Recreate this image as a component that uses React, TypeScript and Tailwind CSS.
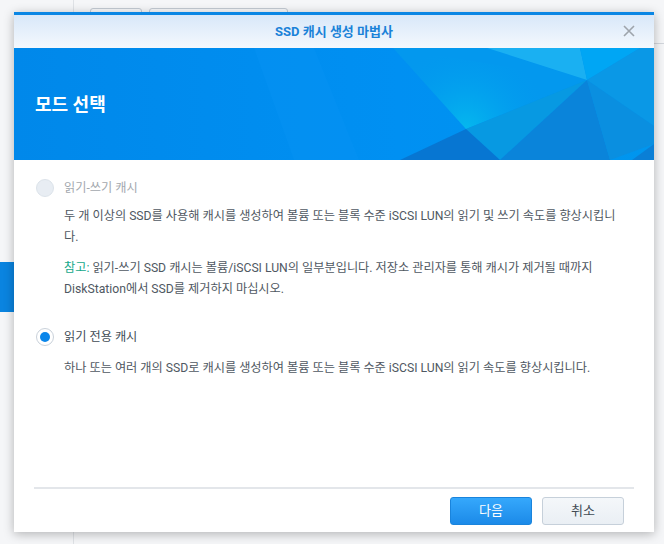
import React from 'react';

const font = { fontFamily: 'Roboto, "Noto Sans CJK KR", "Noto Sans", sans-serif' };

const Banner: React.FC = () => (
  <svg className="absolute inset-0" width="640" height="112" viewBox="0 0 640 112" preserveAspectRatio="none">
    <defs>
      <linearGradient id="bg" x1="0" y1="0" x2="1" y2="0">
        <stop offset="0" stopColor="#0088ea" />
        <stop offset="0.6" stopColor="#0090f2" />
        <stop offset="1" stopColor="#0096ee" />
      </linearGradient>
      <radialGradient id="glow" cx="452" cy="81" r="90" gradientUnits="userSpaceOnUse">
        <stop offset="0" stopColor="#05b8ee" />
        <stop offset="1" stopColor="#0096ee" stopOpacity="0" />
      </radialGradient>
    </defs>
    <rect width="640" height="112" fill="url(#bg)" />
    <polygon points="240,0 300,0 345,112 280,112" fill="#0a95f4" opacity="0.3" />
    <polygon points="379,0 473,0 573,32 452,81" fill="#0398ee" />
    <polygon points="379,0 573,32 452,81" fill="url(#glow)" />
    <polygon points="473,0 566,0 573,32" fill="#1ab0f2" />
    <polygon points="566,0 626,0 573,32" fill="#00a6f4" />
    <polygon points="626,0 640,0 640,78 573,32" fill="#0a98e6" />
    <polygon points="452,81 573,32 486,112" fill="#0799e2" />
    <polygon points="452,81 486,112 386,112" fill="#0776d2" />
    <polygon points="573,32 486,112 596,112" fill="#0a84da" />
    <polygon points="573,32 640,78 640,96 596,112" fill="#0a8fe0" />
    <polygon points="640,96 640,112 618,112" fill="#0a7fd6" />
  </svg>
);

const App: React.FC = () => {
  return (
    <div className="relative w-[664px] h-[544px] bg-[#f5f6f8] overflow-hidden" style={font}>
      {/* desktop behind the dialog */}
      <div className="absolute left-[73px] top-0 w-px h-full bg-[#dfe2e6]" />
      <div className="absolute left-[90px] top-[8px] w-[52px] h-[20px] rounded-[3px] border border-[#c3cad3] bg-[#f7f8fa]" />
      <div className="absolute left-[149px] top-[8px] w-[139px] h-[20px] rounded-[3px] border border-[#c3cad3] bg-[#f7f8fa]" />
      <div className="absolute left-0 top-[262px] w-[14px] h-[50px] bg-[#0a84e0]" />
      <div className="absolute left-[654px] top-[43px] w-[10px] h-px bg-[#d2d6dc]" />

      {/* dialog */}
      <div className="absolute left-[14px] top-[12px] w-[640px] h-[520px] bg-white flex flex-col border-t-[3px] border-[#0a86e4] shadow-[0_2px_10px_rgba(0,0,0,0.28)]">
        <div className="relative h-[33px] shrink-0 flex items-center justify-center bg-gradient-to-b from-[#d8e8f9] to-[#f4f8fd]">
          <span className="text-[13px] font-bold text-[#1a82d8]">SSD 캐시 생성 마법사</span>
          <svg className="absolute right-[19px] top-[10px]" width="12" height="12" viewBox="0 0 12 12">
            <path d="M1 1 L11 11 M11 1 L1 11" stroke="#9ea4ab" strokeWidth="1.6" />
          </svg>
        </div>

        <div className="relative h-[112px] shrink-0 flex items-center px-[21px]">
          <Banner />
          <span className="relative text-[18px] font-bold text-white">모드 선택</span>
        </div>

        <div className="flex-1 pl-[22px] pr-[26px] pt-[19px] text-[12.2px] leading-[21px] text-[#4f5862]">
          <div className="flex items-center gap-[10px] h-[18px]">
            <span className="w-[18px] h-[18px] rounded-full bg-[#e8edf3] border border-[#dce3ea]" />
            <span className="text-[#a3a8ae]">읽기-쓰기 캐시</span>
          </div>
          <div className="pl-[28px] mt-[9px]">
            <p>두 개 이상의 SSD를 사용해 캐시를 생성하여 볼륨 또는 블록 수준 iSCSI LUN의 읽기 및 쓰기 속도를 향상시킵니다.</p>
            <p className="mt-[10px]">
              <span className="text-[#14a88a]">참고: </span>
              읽기-쓰기 SSD 캐시는 볼륨/iSCSI LUN의 일부분입니다. 저장소 관리자를 통해 캐시가 제거될 때까지 DiskStation에서 SSD를 제거하지 마십시오.
            </p>
          </div>

          <div className="flex items-center gap-[10px] h-[18px] mt-[28px]">
            <span className="w-[18px] h-[18px] rounded-full bg-white border border-[#c9d1da] flex items-center justify-center">
              <span className="w-[10px] h-[10px] rounded-full bg-[#0a86ea]" />
            </span>
            <span className="text-[#414b55]">읽기 전용 캐시</span>
          </div>
          <div className="pl-[28px] mt-[12px]">
            <p>하나 또는 여러 개의 SSD로 캐시를 생성하여 볼륨 또는 블록 수준 iSCSI LUN의 읽기 속도를 향상시킵니다.</p>
          </div>
        </div>

        <div className="mx-[20px] h-[2px] bg-[#e3e6ea] shrink-0" />
        <div className="h-[43px] shrink-0 flex items-start justify-end gap-[10px] pr-[30px] pt-[8px]">
          <button className="w-[82px] h-[28px] rounded-[3px] border border-[#1a84dc] bg-gradient-to-b from-[#35a8fc] to-[#1b8ae8] text-white text-[13px]">
            다음
          </button>
          <button className="w-[82px] h-[28px] rounded-[3px] border border-[#c6d0da] bg-gradient-to-b from-[#f4f7fa] to-[#eaeff4] text-[#414b55] text-[13px]">
            취소
          </button>
        </div>
      </div>
    </div>
  );
};

export default App;
